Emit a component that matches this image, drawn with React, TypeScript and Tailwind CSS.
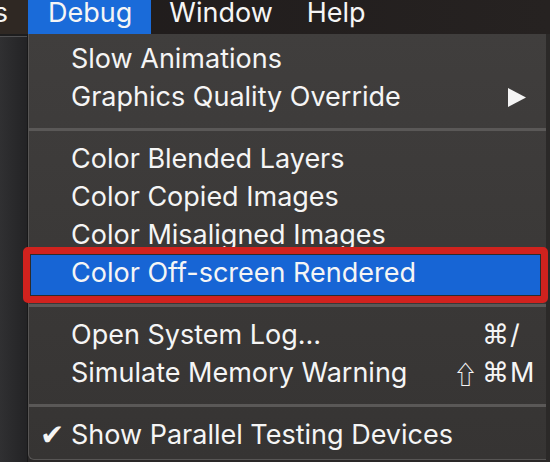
import React from "react";

type Item = {
  label: string;
  check?: boolean;
  submenu?: boolean;
  shift?: boolean;
  keyChar?: string;
  active?: boolean;
};

const groups: Item[][] = [
  [{ label: "Slow Animations" }, { label: "Graphics Quality Override", submenu: true }],
  [
    { label: "Color Blended Layers" },
    { label: "Color Copied Images" },
    { label: "Color Misaligned Images" },
    { label: "Color Off-screen Rendered", active: true },
  ],
  [
    { label: "Open System Log…", keyChar: "/" },
    { label: "Simulate Memory Warning", shift: true, keyChar: "M" },
  ],
  [{ label: "Show Parallel Testing Devices", check: true }],
];

const MenuRow = ({ item }: { item: Item }) => {
  return (
    <div className="relative flex h-[38px] items-center pl-[11px] pr-[6px] leading-[38px] whitespace-nowrap">
      {item.active && (
        // annotation frame drawn over the highlighted row
        <div className="absolute left-[-6px] top-[-7px] h-[56px] w-[525px] rounded-[5px] border-[7px] border-[#d0221e] bg-[#2c2c2c] p-px">
          <div className="h-full w-full bg-[#1765d5]" />
        </div>
      )}
      <span className="relative w-[31px] font-['DejaVu_Sans',sans-serif] text-[29px]">
        {item.check ? "✔" : ""}
      </span>
      <span className="relative flex-1">{item.label}</span>
      {item.submenu && (
        <svg width="18" height="19" viewBox="0 0 18 19" className="mr-[14px]">
          <polygon points="0,0 18,9.5 0,19" fill="#f4f4f4" />
        </svg>
      )}
      {item.keyChar && (
        <span className="relative flex items-center font-['DejaVu_Sans',sans-serif] text-[27px]">
          {item.shift && (
            <span className="mr-[4px] font-['Noto_Sans_CJK_JP','DejaVu_Sans',sans-serif] text-[25px]">⇧</span>
          )}
          <span className="mr-[1px]">⌘</span>
          <span className="w-[30px] font-[Inter,sans-serif]">{item.keyChar}</span>
        </span>
      )}
    </div>
  );
};

const Separator = () => (
  <div className="pt-[12px] pb-[9px]">
    <div className="h-[3px] bg-[#5a5857]" />
  </div>
);

export default function App() {
  return (
    <div className="flex h-[462px] w-[550px] flex-col overflow-hidden bg-[#2a2828] font-[Inter,'DejaVu_Sans',sans-serif] text-[27px] text-[#f5f5f5]">
      <div className="flex h-[34px] shrink-0 bg-gradient-to-r from-[#1f1b1b] to-[#262221] leading-[26px]">
        <div className="flex w-[28px] justify-end overflow-hidden bg-[#2f2823] pr-5 whitespace-nowrap">
          Tools
        </div>
        <div className="bg-[#1a6bd9] pl-[20px] pr-[19px]">Debug</div>
        <div className="pl-[18px] pr-[17px]">Window</div>
        <div className="pl-[17px]">Help</div>
      </div>

      <div className="flex flex-1">
        <div className="flex w-[28px] flex-col border-r border-[#19191a]">
          <div className="h-[2px] bg-[#1d1d1e]" />
          <div className="h-px bg-[#505052]" />
          <div className="flex-1 bg-gradient-to-r from-[#303032] to-[#232325]" />
        </div>

        <div className="h-[426px] w-[518px] rounded-bl-[6px] border-b border-l border-[#575554] bg-gradient-to-b from-[#403e3d] to-[#363433] pt-[6px] pb-[5px]">
          {groups.map((group, gi) => (
            <div key={gi}>
              {gi > 0 && <Separator />}
              {group.map((item) => (
                <MenuRow key={item.label} item={item} />
              ))}
            </div>
          ))}
        </div>

        <div className="flex-1 bg-[#2b2928]" />
      </div>
    </div>
  );
}
